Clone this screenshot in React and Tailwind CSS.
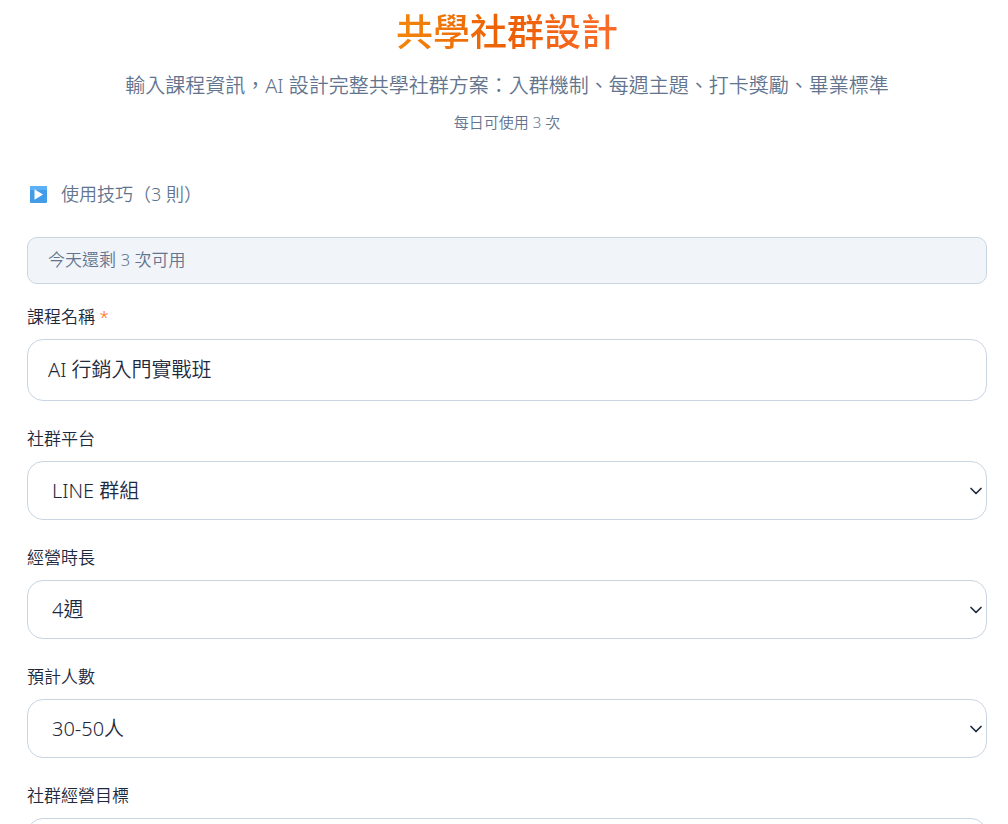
import { ChevronDown } from "lucide-react";

const selects = [
  {
    id: "platform",
    label: "社群平台",
    options: ["LINE 群組", "Facebook 社團", "Discord", "Telegram"],
  },
  {
    id: "duration",
    label: "經營時長",
    options: ["4週", "8週", "12週"],
  },
  {
    id: "size",
    label: "預計人數",
    options: ["30-50人", "50-100人", "100人以上"],
  },
];

function Field({ id, label, required, children }) {
  return (
    <div className="flex flex-col gap-2">
      <label htmlFor={id} className="text-[17px] leading-7">
        {label}
        {required && <span className="text-orange-500"> *</span>}
      </label>
      {children}
    </div>
  );
}

function SelectBox({ id, options }) {
  return (
    <div className="relative">
      <select
        id={id}
        className="h-[59px] w-full appearance-none rounded-2xl border border-slate-300 bg-white px-6 text-xl"
      >
        {options.map((o) => (
          <option key={o}>{o}</option>
        ))}
      </select>
      <ChevronDown
        size={20}
        strokeWidth={2}
        className="pointer-events-none absolute inset-y-0 right-px my-auto"
        aria-hidden="true"
      />
    </div>
  );
}

function PlayIcon() {
  return (
    <svg className="size-[17px] shrink-0" viewBox="0 0 17 17" aria-hidden="true">
      <rect width="17" height="17" rx="1" fill="#429ce8" />
      <path d="M0 1a1 1 0 0 1 1-1h15a1 1 0 0 1 1 1v3H0z" fill="#5cb0f5" />
      <path d="M4.5 3.2v10.6L13 8.5z" fill="#fff" />
    </svg>
  );
}

export default function App() {
  return (
    <main className="bg-white pt-2 pr-[21px] pb-10 pl-[27px] font-['Noto_Sans','Noto_Sans_CJK_TC_DemiLight','Noto_Sans_CJK_TC',sans-serif] font-light text-slate-800">
      <header className="flex flex-col items-center text-center">
        <h1 className="bg-linear-to-r/srgb from-[#f2860c] via-[#ec5f04] to-[#fb6c2c] bg-clip-text font-['Noto_Sans_CJK_TC',sans-serif] text-[37px] leading-11 font-medium text-transparent">
          共學社群設計
        </h1>
        <p className="mt-4 text-xl leading-9 text-slate-500">
          輸入課程資訊，AI 設計完整共學社群方案：入群機制、每週主題、打卡獎勵、畢業標準
        </p>
        <p className="mt-1.5 text-[15px] leading-6 text-slate-500">每日可使用 3 次</p>
      </header>

      <button type="button" className="mt-[46px] flex items-center gap-3.5 pl-[3px] text-lg leading-7 text-slate-500">
        <PlayIcon />
        使用技巧（3 則）
      </button>

      <p className="mt-[29px] rounded-[10px] border border-slate-300 bg-slate-100 px-5 pt-[7px] pb-[9px] text-[17px] leading-[29px] text-slate-500">
        今天還剩 3 次可用
      </p>

      <form className="mt-[19px] flex flex-col gap-6">
        <Field id="course" label="課程名稱" required>
          <input
            id="course"
            type="text"
            defaultValue="AI 行銷入門實戰班"
            className="h-[62px] w-full rounded-2xl border border-slate-300 bg-white px-5 pb-1 text-xl"
          />
        </Field>
        {selects.map((s) => (
          <Field key={s.id} id={s.id} label={s.label}>
            <SelectBox id={s.id} options={s.options} />
          </Field>
        ))}
        <Field id="goal" label="社群經營目標">
          <textarea
            id="goal"
            rows={3}
            className="w-full rounded-2xl border border-slate-300 bg-white px-5 py-4 text-xl"
          />
        </Field>
      </form>
    </main>
  );
}
